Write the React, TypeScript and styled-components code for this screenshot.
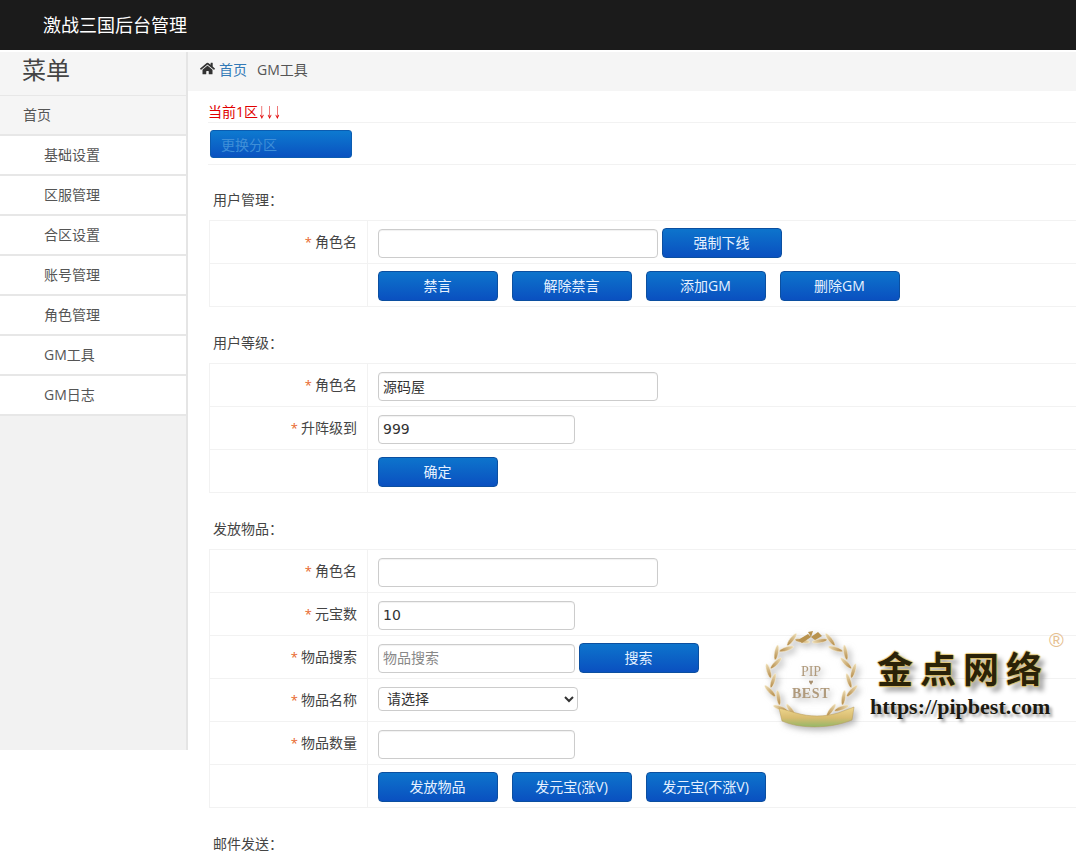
import React from "react";
import styled, { createGlobalStyle } from "styled-components";
import { FaHome } from "react-icons/fa";

const FONT = `"Open Sans", "Noto Sans CJK SC", sans-serif`;
const INPUT_FONT = `"DejaVu Sans", "Noto Sans CJK SC", sans-serif`;

const GlobalStyle = createGlobalStyle`
  html, body {
    margin: 0;
    padding: 0;
    height: 856px;
    overflow: hidden;
    background: #fff;
    font-family: ${FONT};
    font-size: 14px;
    color: #333;
  }
  * { box-sizing: border-box; }
`;

const Page = styled.div`
  position: relative;
  width: 1076px;
  height: 856px;
  overflow: hidden;
`;

const TopBar = styled.header`
  height: 50px;
  background: #1b1b1b;
  color: #fff;
  font-size: 18px;
  line-height: 50px;
  padding-left: 43px;
`;

const Body = styled.div`
  display: flex;
  align-items: flex-start;
  padding-top: 2px;
`;

const Sidebar = styled.aside`
  width: 188px;
  height: 698px;
  flex: none;
  background: #f2f2f2;
  border-right: 2px solid #e5e5e5;
`;

const MenuTitle = styled.div`
  height: 44px;
  padding-left: 22px;
  font-size: 24px;
  line-height: 36px;
  color: #444;
  background: #f5f5f5;
  border-bottom: 1px solid #e7e7e7;
`;

const MenuItem = styled.div<{ $top?: boolean }>`
  height: 40px;
  line-height: 37px;
  padding-left: ${(p) => (p.$top ? "23px" : "44px")};
  background: ${(p) => (p.$top ? "#f5f5f5" : "#fff")};
  border-bottom: 2px solid #e7e7e7;
  color: #555;
`;

const Main = styled.main`
  flex: 1;
  min-width: 0;
`;

const Crumbs = styled.nav`
  height: 39px;
  display: flex;
  align-items: center;
  padding: 0 0 6px 12px;
  background: #f5f5f5;
  font-size: 14px;
  color: #555;
  svg {
    color: #333;
    font-size: 15px;
    margin-right: 4px;
  }
  a {
    color: #337ab7;
    margin-right: 10px;
  }
`;

const Content = styled.div`
  padding: 12px 0 0 20px;
`;

const ZoneLine = styled.div`
  height: 20px;
  line-height: 17px;
  color: #e00000;
  border-bottom: 1px solid #f2f2f2;
  span {
    display: inline-block;
    transform: scaleX(0.55);
    transform-origin: left center;
  }
`;

const ZoneAction = styled.div`
  height: 42px;
  padding: 7px 0 0 2px;
  border-bottom: 1px solid #f2f2f2;
`;

const ZoneButton = styled.button`
  display: block;
  width: 142px;
  height: 28px;
  padding: 0 10px;
  text-align: left;
  font: inherit;
  color: #3f8fd8;
  background: linear-gradient(#0d7ad0, #0a52c0);
  border: 1px solid #0b5cb0;
  border-radius: 3px;
`;

const Section = styled.section`
  padding-left: 1px;
`;

const SectionTitle = styled.div<{ $first?: boolean }>`
  height: ${(p) => (p.$first ? "55px" : "56px")};
  padding: ${(p) => (p.$first ? "25px" : "26px")} 0 0 4px;
  line-height: 20px;
  color: #444;
`;

const Table = styled.div`
  border-top: 1px solid #f2f2f2;
  border-left: 1px solid #f2f2f2;
`;

const Row = styled.div`
  display: grid;
  grid-template-columns: 158px 1fr;
  height: 43px;
  border-bottom: 1px solid #f2f2f2;
`;

const Label = styled.div`
  border-right: 1px solid #f2f2f2;
  padding-right: 10px;
  text-align: right;
  line-height: 42px;
  color: #444;
  i {
    font-style: normal;
    font-size: 13px;
    color: #e8662a;
    margin-right: 3px;
  }
`;

const Field = styled.div`
  display: flex;
  align-items: center;
  padding: 2px 0 0 10px;
  gap: 14px;
`;

const FieldTight = styled(Field)`
  gap: 4px;
`;

const TextInput = styled.input<{ $w: number }>`
  width: ${(p) => p.$w}px;
  height: 29px;
  padding: 0 4px;
  border: 1px solid #ccc;
  border-radius: 4px;
  background: #fff;
  font: 14px ${INPUT_FONT};
  color: #333;
  box-shadow: inset 0 1px 1px rgba(0, 0, 0, 0.06);
  &::placeholder {
    color: #888;
    font-family: ${FONT};
    font-size: 14px;
  }
`;

const Select = styled.select`
  width: 200px;
  height: 24px;
  margin-top: -4px;
  padding-left: 4px;
  border: 1px solid #ccc;
  border-radius: 4px;
  background: #fff;
  font: 14px ${INPUT_FONT};
  color: #333;
`;

const ActionButton = styled.button`
  width: 120px;
  height: 30px;
  padding: 0 1px 2px 0;
  color: #e6f1ff;
  font: 14px ${FONT};
  background: linear-gradient(#0d74cc, #0a50c0);
  border: 1px solid #0b4fa0;
  border-radius: 4px;
`;

const Watermark = styled.div`
  position: absolute;
  left: 764px;
  top: 628px;
  width: 310px;
  height: 110px;
  pointer-events: none;
`;

const WreathBox = styled.svg`
  position: absolute;
  left: 0;
  top: 0;
  filter: drop-shadow(3px 3px 3px rgba(120, 120, 120, 0.55));
`;

const BrandName = styled.div`
  position: absolute;
  left: 113px;
  top: 14px;
  font: 700 36px "Noto Sans CJK SC", sans-serif;
  line-height: 50px;
  letter-spacing: 7px;
  white-space: nowrap;
  color: #2a2208;
  text-shadow: 1px 0 1px #d8b860, -1px 0 1px #e6cc80, 0 1px 1px #d8b860, 0 -1px 1px #e6cc80, 5px 5px 5px #999;
`;

const BrandUrl = styled.div`
  position: absolute;
  left: 106px;
  top: 67px;
  font: 700 22px "Liberation Serif", serif;
  line-height: 24px;
  white-space: nowrap;
  color: #1c1a10;
  text-shadow: 3px 3px 3px #aaa;
`;

const Registered = styled.div`
  position: absolute;
  left: 285px;
  top: 1px;
  font: 20px "Liberation Sans", sans-serif;
  color: #e6c090;
`;

const menu = ["基础设置", "区服管理", "合区设置", "账号管理", "角色管理", "GM工具", "GM日志"];

// leaves along one side of the wreath, angle in degrees from the bottom
const leaves = Array.from({ length: 11 }, (_, i) => 32 + i * 13.5);

const Wreath = () => (
  <WreathBox width="100" height="110" viewBox="0 0 100 110">
    <defs>
      <linearGradient id="ribbon" x1="0" y1="0" x2="0" y2="1">
        <stop offset="0" stopColor="#f0d890" />
        <stop offset="0.55" stopColor="#d8bc70" />
        <stop offset="1" stopColor="#94b868" />
      </linearGradient>
      <linearGradient id="leaf" x1="0" y1="0" x2="0" y2="1">
        <stop offset="0" stopColor="#ecdcb4" />
        <stop offset="1" stopColor="#b48a48" />
      </linearGradient>
    </defs>
    {leaves.map((a, i) => {
      const r = (a * Math.PI) / 180;
      const ring = i % 2 ? 43 : 38;
      const tilt = 90 - a + (i % 2 ? 26 : -22);
      const right = 47 + ring * Math.sin(r);
      const left = 47 - ring * Math.sin(r);
      const cy = 50 + ring * Math.cos(r);
      return (
        <g key={a}>
          <ellipse cx={right} cy={cy} rx="1.9" ry="7.5" fill="url(#leaf)" stroke="#fff6dc" strokeWidth="0.4" transform={`rotate(${tilt} ${right} ${cy})`} />
          <ellipse cx={left} cy={cy} rx="1.9" ry="7.5" fill="url(#leaf)" stroke="#fff6dc" strokeWidth="0.4" transform={`rotate(${-tilt} ${left} ${cy})`} />
        </g>
      );
    })}
    <path d="M15 80 L32 85 C46 89 60 89 74 85 L90 79 L88 92 C66 101 36 101 18 93 Z" fill="url(#ribbon)" stroke="#b89a58" strokeWidth="0.5" />
    <path d="M47 9 L38 15 L34 12 L44 6 Z M47 9 L54 4 L58 8 L51 12 Z M47 9 L44 4 L49 3 Z" fill="#b8924e" />
    <text x="47" y="48" textAnchor="middle" fontFamily="Liberation Serif" fontSize="14" fill="#b09a7c">PIP</text>
    <text x="47" y="57" textAnchor="middle" fontFamily="Liberation Serif" fontSize="8" fill="#a89070">♥</text>
    <text x="47" y="70" textAnchor="middle" fontFamily="Liberation Serif" fontWeight="700" fontSize="14" letterSpacing="0.6" fill="#b09a7c">BEST</text>
  </WreathBox>
);

export default function App() {
  return (
    <Page>
      <GlobalStyle />
      <TopBar>激战三国后台管理</TopBar>
      <Body>
        <Sidebar>
          <MenuTitle>菜单</MenuTitle>
          <MenuItem $top>首页</MenuItem>
          {menu.map((m) => (
            <MenuItem key={m}>{m}</MenuItem>
          ))}
        </Sidebar>
        <Main>
          <Crumbs>
            <FaHome />
            <a>首页</a>
            GM工具
          </Crumbs>
          <Content>
            <ZoneLine>当前1区<span>↓↓↓</span></ZoneLine>
            <ZoneAction>
              <ZoneButton>更换分区</ZoneButton>
            </ZoneAction>

            <Section>
              <SectionTitle $first>用户管理：</SectionTitle>
              <Table>
                <Row>
                  <Label><i>*</i>角色名</Label>
                  <FieldTight>
                    <TextInput $w={280} />
                    <ActionButton>强制下线</ActionButton>
                  </FieldTight>
                </Row>
                <Row>
                  <Label />
                  <Field>
                    <ActionButton>禁言</ActionButton>
                    <ActionButton>解除禁言</ActionButton>
                    <ActionButton>添加GM</ActionButton>
                    <ActionButton>删除GM</ActionButton>
                  </Field>
                </Row>
              </Table>
            </Section>

            <Section>
              <SectionTitle>用户等级：</SectionTitle>
              <Table>
                <Row>
                  <Label><i>*</i>角色名</Label>
                  <Field><TextInput $w={280} defaultValue="源码屋" /></Field>
                </Row>
                <Row>
                  <Label><i>*</i>升阵级到</Label>
                  <Field><TextInput $w={197} defaultValue="999" /></Field>
                </Row>
                <Row>
                  <Label />
                  <Field><ActionButton>确定</ActionButton></Field>
                </Row>
              </Table>
            </Section>

            <Section>
              <SectionTitle>发放物品：</SectionTitle>
              <Table>
                <Row>
                  <Label><i>*</i>角色名</Label>
                  <Field><TextInput $w={280} /></Field>
                </Row>
                <Row>
                  <Label><i>*</i>元宝数</Label>
                  <Field><TextInput $w={197} defaultValue="10" /></Field>
                </Row>
                <Row>
                  <Label><i>*</i>物品搜索</Label>
                  <FieldTight>
                    <TextInput $w={197} placeholder="物品搜索" />
                    <ActionButton>搜索</ActionButton>
                  </FieldTight>
                </Row>
                <Row>
                  <Label><i>*</i>物品名称</Label>
                  <Field>
                    <Select defaultValue="">
                      <option value="">请选择</option>
                    </Select>
                  </Field>
                </Row>
                <Row>
                  <Label><i>*</i>物品数量</Label>
                  <Field><TextInput $w={197} /></Field>
                </Row>
                <Row>
                  <Label />
                  <Field>
                    <ActionButton>发放物品</ActionButton>
                    <ActionButton>发元宝(涨V)</ActionButton>
                    <ActionButton>发元宝(不涨V)</ActionButton>
                  </Field>
                </Row>
              </Table>
            </Section>

            <Section>
              <SectionTitle>邮件发送：</SectionTitle>
            </Section>
          </Content>
        </Main>
      </Body>
      <Watermark>
        <Wreath />
        <BrandName>金点网络</BrandName>
        <BrandUrl>https://pipbest.com</BrandUrl>
        <Registered>®</Registered>
      </Watermark>
    </Page>
  );
}
